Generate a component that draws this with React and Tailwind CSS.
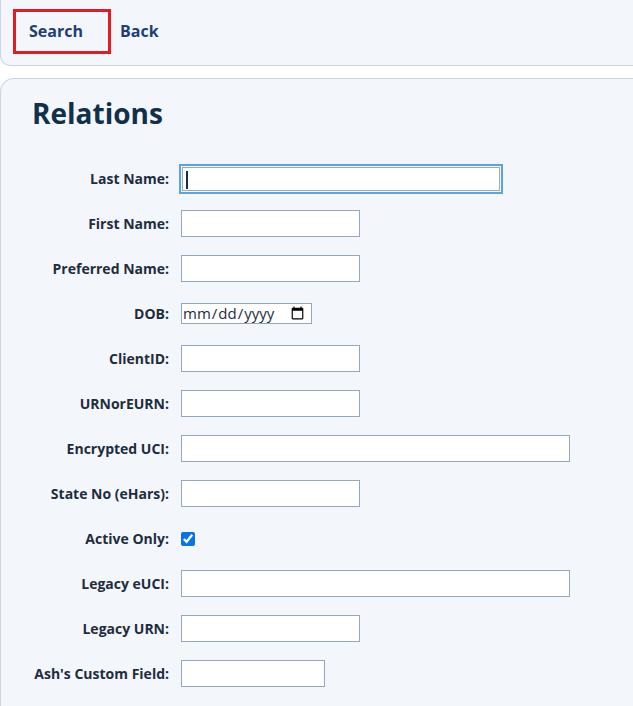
import { useState } from "react";

const fields = [
  { label: "Last Name:", kind: "text", focus: true },
  { label: "First Name:", kind: "text", w: "w-[179px]" },
  { label: "Preferred Name:", kind: "text", w: "w-[179px]" },
  { label: "DOB:", kind: "date" },
  { label: "ClientID:", kind: "text", w: "w-[179px]" },
  { label: "URNorEURN:", kind: "text", w: "w-[179px]" },
  { label: "Encrypted UCI:", kind: "text", w: "w-[389px]" },
  { label: "State No (eHars):", kind: "text", w: "w-[179px]" },
  { label: "Active Only:", kind: "check" },
  { label: "Legacy eUCI:", kind: "text", w: "w-[389px]" },
  { label: "Legacy URN:", kind: "text", w: "w-[179px]" },
  { label: "Ash's Custom Field:", kind: "text", w: "w-[144px]" },
];

const Field = ({ f }) => {
  if (f.kind === "date") {
    return (
      <input
        type="date"
        className="block w-[131px] h-[21px] bg-white border border-[#94a9c0] text-[15px] text-[#1e2d3d] pl-0 pr-[4px]"
      />
    );
  }
  if (f.kind === "check") {
    return <input type="checkbox" defaultChecked className="block w-[14px] h-[14px] accent-[#0b74e5]" />;
  }
  if (f.focus) {
    // focused box with caret
    return (
      <div className="relative border-2 border-[#5ca3e6] p-[1px]">
        <input type="text" className="block w-[318px] h-[24px] bg-white border border-[#a0aab4] outline-none" />
        <span className="absolute left-[5px] top-[5px] w-[2px] h-[18px] bg-[#11304a]" />
      </div>
    );
  }
  return <input type="text" className={`block ${f.w} h-[27px] bg-white border border-[#94a9c0] outline-none`} />;
};

const App = () => {
  const [tab] = useState("search");

  return (
    <div className="min-h-screen bg-white font-['Segoe_UI','Open_Sans','Noto_Sans',sans-serif]">
      <nav className="h-[66px] bg-[#f3f6fb] border-b border-l border-[#cbd5e1] rounded-bl-[10px] flex items-center pl-[12px] pb-[3px]">
        <div
          className={`w-[98px] h-[45px] flex items-center pl-[13px] border-[3px] ${
            tab === "search" ? "border-[#e31b23]" : "border-transparent"
          } text-[16px] font-bold text-[#1f3e76]`}
        >
          Search
        </div>
        <div className="ml-[9px] text-[16px] font-bold text-[#1f3e76]">Back</div>
      </nav>

      <div className="mt-[12px] bg-[#f3f6fb] border-t border-l border-[#cbd5e1] rounded-tl-[14px] pt-[14px] pb-[20px]">
        <h1 className="pl-[31px] text-[28px] font-bold text-[#11304a] leading-[40px]">Relations</h1>

        <div className="mt-[23px] flex flex-col">
          {fields.map((f) => (
            <div key={f.label} className="h-[45px] flex items-center">
              <label className="w-[169px] pr-[1px] text-right text-[14px] font-bold text-[#1e2d3d]">{f.label}</label>
              <div className={f.focus ? "ml-[9px]" : "ml-[11px]"}>
                <Field f={f} />
              </div>
            </div>
          ))}
        </div>
      </div>
    </div>
  );
};

export default App;
